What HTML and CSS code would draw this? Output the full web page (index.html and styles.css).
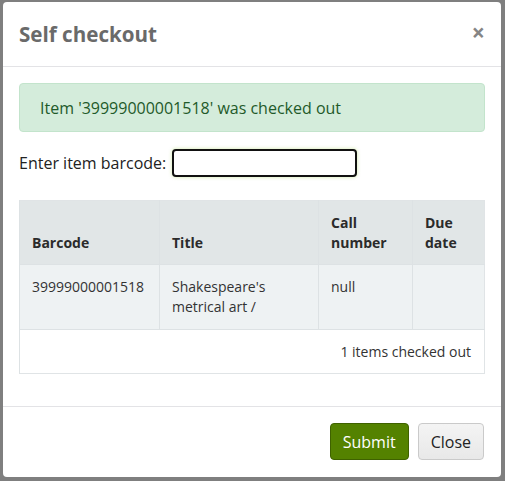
FILE: index.html
```html
<!DOCTYPE html>
<html>
<head>
<meta charset="utf-8">
<link rel="stylesheet" href="styles.css">
</head>
<body>
<div class="backdrop">
  <div class="modal">
    <div class="modal-header">
      <h3 class="modal-title">Self checkout</h3>
      <span class="close">×</span>
    </div>
    <div class="modal-body">
      <div class="alert">Item '39999000001518' was checked out</div>
      <div class="barcode-row">
        <label class="barcode-label">Enter item barcode:</label>
        <input class="barcode-input" type="text">
      </div>
      <table class="checkouts">
        <thead>
          <tr>
            <th class="c-barcode">Barcode</th>
            <th class="c-title">Title</th>
            <th class="c-call">Call number</th>
            <th class="c-due">Due date</th>
          </tr>
        </thead>
        <tbody>
          <tr class="item-row">
            <td>39999000001518</td>
            <td>Shakespeare's metrical art /</td>
            <td>null</td>
            <td></td>
          </tr>
        </tbody>
        <tfoot>
          <tr>
            <td colspan="4" class="total">1 items checked out</td>
          </tr>
        </tfoot>
      </table>
    </div>
    <div class="modal-footer">
      <button class="btn btn-submit">Submit</button>
      <button class="btn btn-close">Close</button>
    </div>
  </div>
</div>
</body>
</html>
```

FILE: styles.css
```css
html, body {
  margin: 0;
  padding: 0;
}
body {
  background: #7f7f7f;
  font-family: "Open Sans", "Noto Sans", sans-serif;
  font-size: 14px;
  color: #333;
}
.backdrop {
  width: 505px;
  height: 481px;
  padding: 2px 4px 4px 3px;
  box-sizing: border-box;
}
.modal {
  background: #fff;
  border-radius: 4px;
  height: 475px;
  display: flex;
  flex-direction: column;
}
.modal-header {
  height: 65px;
  flex: none;
  box-sizing: border-box;
  border-bottom: 1px solid #e3e3e6;
  display: flex;
  align-items: center;
  justify-content: space-between;
  padding: 0 16px 0 16px;
}
.modal-title {
  margin: 0;
  font-size: 20.6px;
  font-weight: 700;
  color: #6a6a6a;
}
.close {
  font-size: 23px;
  font-weight: 700;
  color: #858585;
  line-height: 1;
  margin-top: -4px;
}
.modal-body {
  padding: 16px 16px 31px;
  flex: 1;
}
.alert {
  background: #d4ecdb;
  border: 1px solid #c3e4cc;
  border-radius: 4px;
  color: #1f5a2a;
  padding: 13px 20px 12px;
  line-height: 22px;
  font-size: 16px;
}
.barcode-row {
  margin-top: 17px;
  display: flex;
  align-items: center;
  gap: 6px;
}
.barcode-label {
  color: #222;
  font-size: 16px;
}
.barcode-input {
  width: 185px;
  height: 28px;
  box-sizing: border-box;
  border: 2px solid #111;
  border-radius: 4px;
  box-shadow: 0 0 3px 1px rgba(200, 230, 150, 0.5);
  outline: none;
}
.checkouts {
  margin-top: 23px;
  width: 100%;
  border-collapse: collapse;
  border: 1px solid #e0e4e6;
}
.checkouts th,
.checkouts td {
  text-align: left;
  vertical-align: top;
  line-height: 20px;
  padding: 12px 12px;
  border-left: 1px solid #dde2e4;
}
.checkouts th {
  background: #e1e6e7;
  vertical-align: bottom;
  font-weight: 700;
  color: #2b2b2b;
  border-bottom: 1px solid #dde2e4;
  padding: 12px 12px 11px;
}
.c-barcode { width: 115px; }
.c-title { width: 134px; }
.c-call { width: 69px; }
.item-row td {
  background: #eef2f3;
  border-bottom: 1px solid #dde2e4;
  color: #333;
}
.total {
  text-align: right !important;
  padding: 12px 13px 11px !important;
  color: #333;
}
.modal-footer {
  border-top: 1px solid #e3e3e6;
  padding: 16px 17px 17px 16px;
  display: flex;
  justify-content: flex-end;
  gap: 9px;
}
.btn {
  font-family: "Open Sans", "Noto Sans", sans-serif;
  font-size: 16px;
  height: 37px;
  border-radius: 4px;
  padding: 0 12px;
  cursor: pointer;
}
.btn-submit {
  background: #548200;
  border: 1px solid #3f6200;
  color: #fff;
}
.btn-close {
  background: linear-gradient(#f4f4f4, #e8e8e8);
  border: 1px solid #cacaca;
  color: #222;
}
```
